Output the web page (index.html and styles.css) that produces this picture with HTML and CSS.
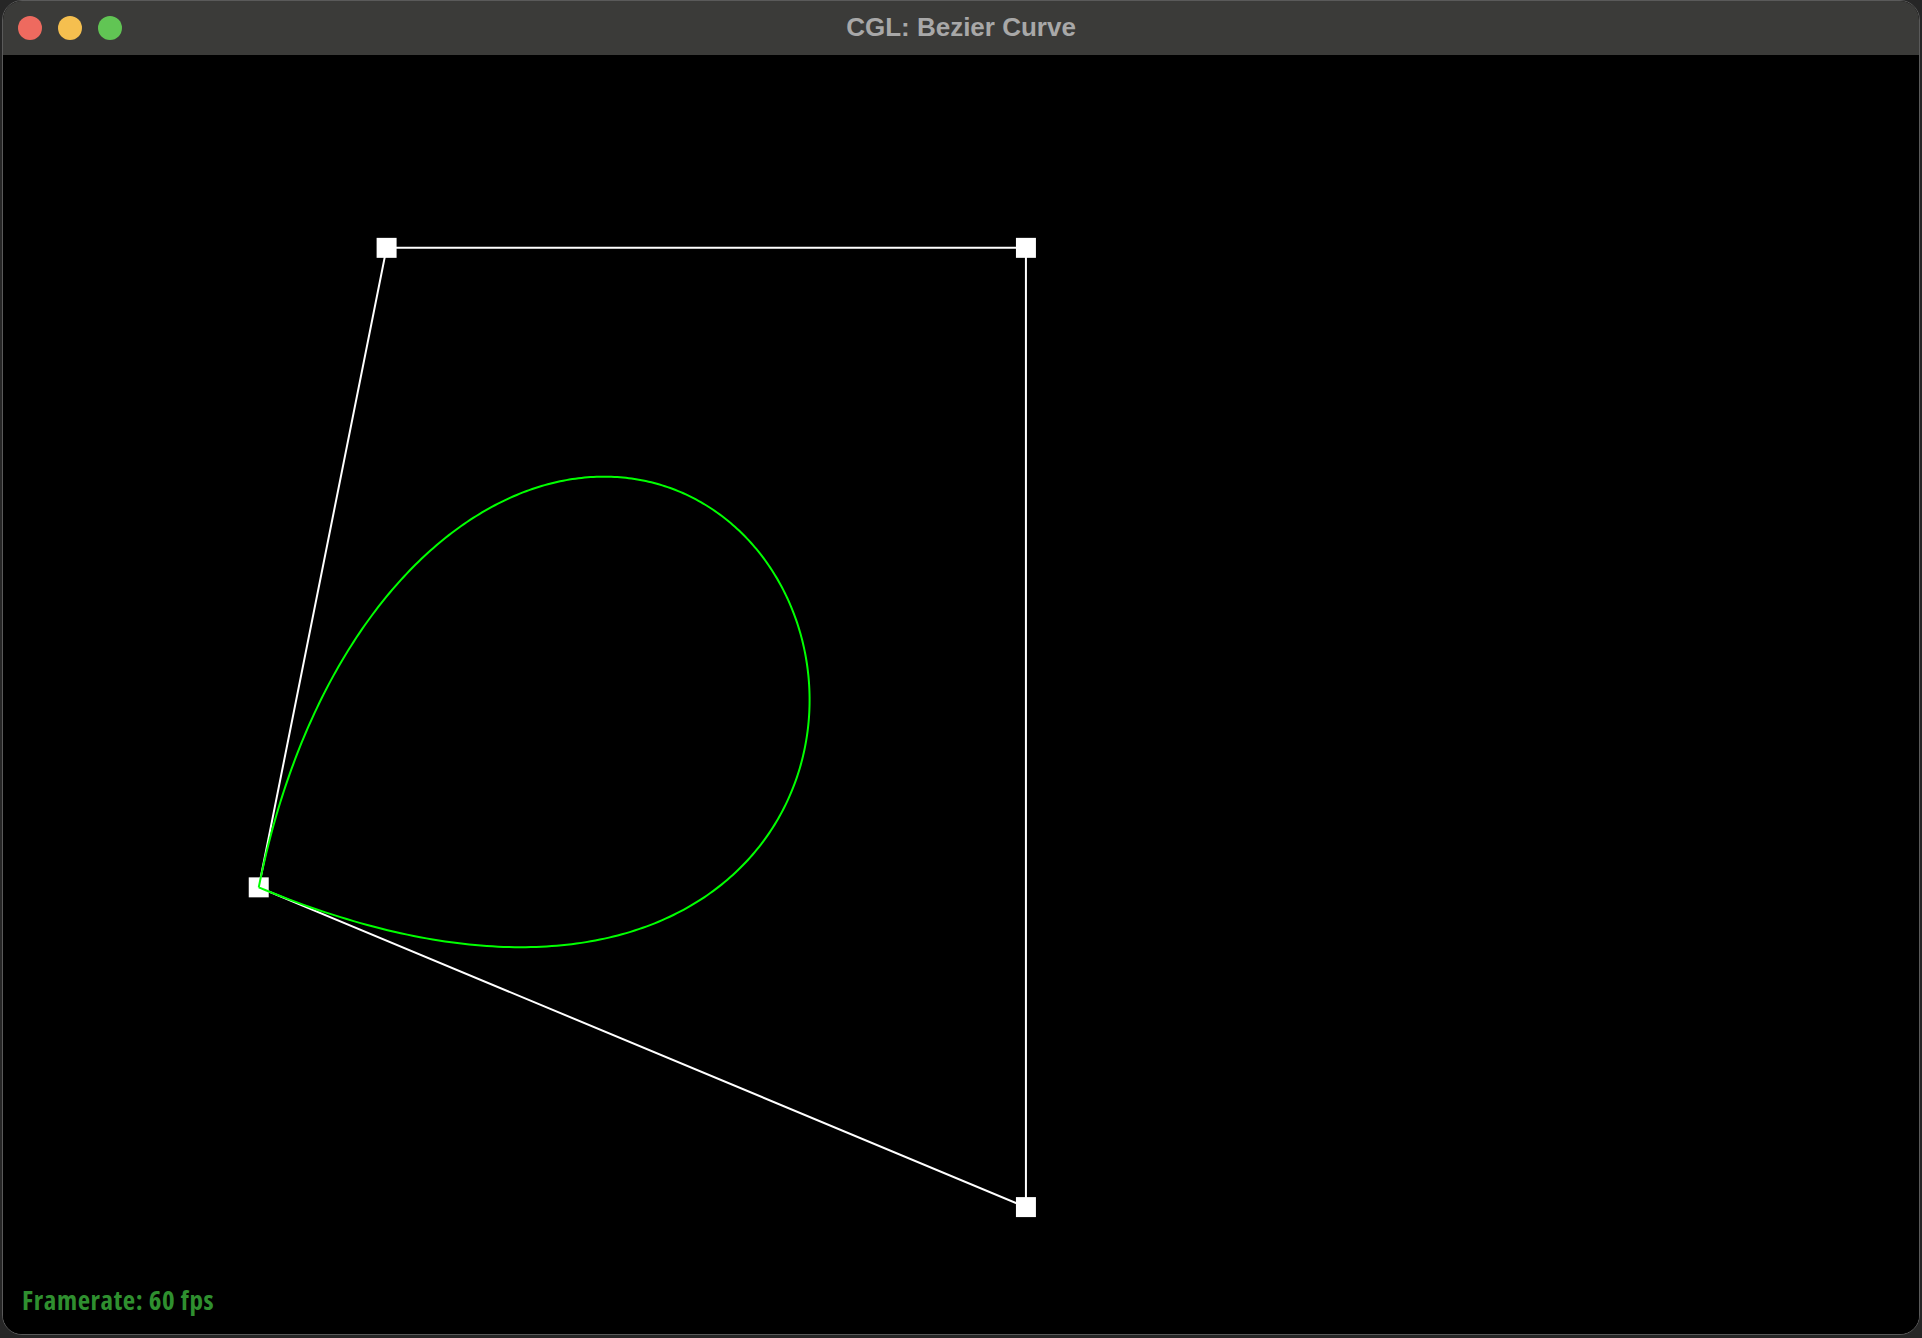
FILE: index.html
```html
<!DOCTYPE html>
<html lang="en">
<head>
<meta charset="utf-8">
<title>CGL: Bezier Curve</title>
<link rel="stylesheet" href="styles.css">
</head>
<body>
<div class="window">
  <div class="titlebar">
    <div class="lights">
      <span class="light red"></span>
      <span class="light yellow"></span>
      <span class="light green"></span>
    </div>
    <div class="title">CGL: Bezier Curve</div>
    <div class="spacer"></div>
  </div>
  <div class="canvas">
    <svg class="scene" viewBox="2 55 1918 1280" preserveAspectRatio="none" xmlns="http://www.w3.org/2000/svg">
      <polyline class="poly" points="258,888 386,248 1026,248 1026,1208 258,888"/>
      <rect class="cp" x="248" y="878" width="20" height="20"/>
      <rect class="cp" x="376" y="238" width="20" height="20"/>
      <rect class="cp" x="1016" y="238" width="20" height="20"/>
      <rect class="cp" x="1016" y="1198" width="20" height="20"/>
      <path id="curve" class="curve" d="" data-points="258,888 386,248 1026,248 1026,1208 258,888"/>
    </svg>
    <div class="fps">Framerate: 60 fps</div>
  </div>
</div>
<script src="script.js"></script>
</body>
</html>
```

FILE: styles.css
```css
html, body {
  margin: 0;
  padding: 0;
  background: #262626;
  width: 1922px;
  height: 1338px;
  overflow: hidden;
}

body {
  padding: 0 2px 3px 2px;
  box-sizing: border-box;
}

.window {
  width: 1918px;
  height: 1335px;
  box-sizing: border-box;
  border: 1px solid #5a5a5a;
  border-radius: 20px;
  overflow: hidden;
  display: flex;
  flex-direction: column;
  background: #000;
}

.titlebar {
  height: 54px;
  flex: 0 0 54px;
  background: #3b3b39;
  display: grid;
  grid-template-columns: 1fr auto 1fr;
  align-items: center;
}

.lights {
  display: flex;
  gap: 16px;
  padding-left: 15px;
}

.light {
  width: 24px;
  height: 24px;
  border-radius: 50%;
  display: block;
}

.red { background: #ee6a5f; }
.yellow { background: #f5bf4f; }
.green { background: #61c554; }

.title {
  font-family: "Liberation Sans", Arial, sans-serif;
  font-weight: bold;
  font-size: 26px;
  color: #a8a8a8;
  margin-top: -2px;
}

.canvas {
  flex: 1 1 auto;
  position: relative;
  background: #000;
}

.scene {
  display: block;
  width: 100%;
  height: 100%;
}

.poly {
  fill: none;
  stroke: #ffffff;
  stroke-width: 2;
}

.cp {
  fill: #ffffff;
}

.curve {
  fill: none;
  stroke: #00ff00;
  stroke-width: 2;
  stroke-linejoin: round;
}

.fps {
  position: absolute;
  left: 19px;
  bottom: 21px;
  font-family: "Open Sans", "DejaVu Sans Condensed", sans-serif;
  font-stretch: condensed;
  font-weight: 700;
  font-size: 27px;
  letter-spacing: 0.6px;
  line-height: 1;
  color: #2f8f2f;
}
```

FILE: script.js
```js
(function () {
  var path = document.getElementById('curve');
  var pts = path.getAttribute('data-points').split(' ').map(function (p) {
    var a = p.split(',');
    return [parseFloat(a[0]), parseFloat(a[1])];
  });
  var n = pts.length - 1;
  function binom(n, k) {
    var r = 1;
    for (var i = 1; i <= k; i++) r = r * (n - k + i) / i;
    return r;
  }
  var steps = 400;
  var d = [];
  for (var s = 0; s <= steps; s++) {
    var t = s / steps;
    var x = 0, y = 0;
    for (var k = 0; k <= n; k++) {
      var b = binom(n, k) * Math.pow(t, k) * Math.pow(1 - t, n - k);
      x += b * pts[k][0];
      y += b * pts[k][1];
    }
    d.push((s === 0 ? 'M' : 'L') + x.toFixed(2) + ' ' + y.toFixed(2));
  }
  path.setAttribute('d', d.join(' '));
})();
```
